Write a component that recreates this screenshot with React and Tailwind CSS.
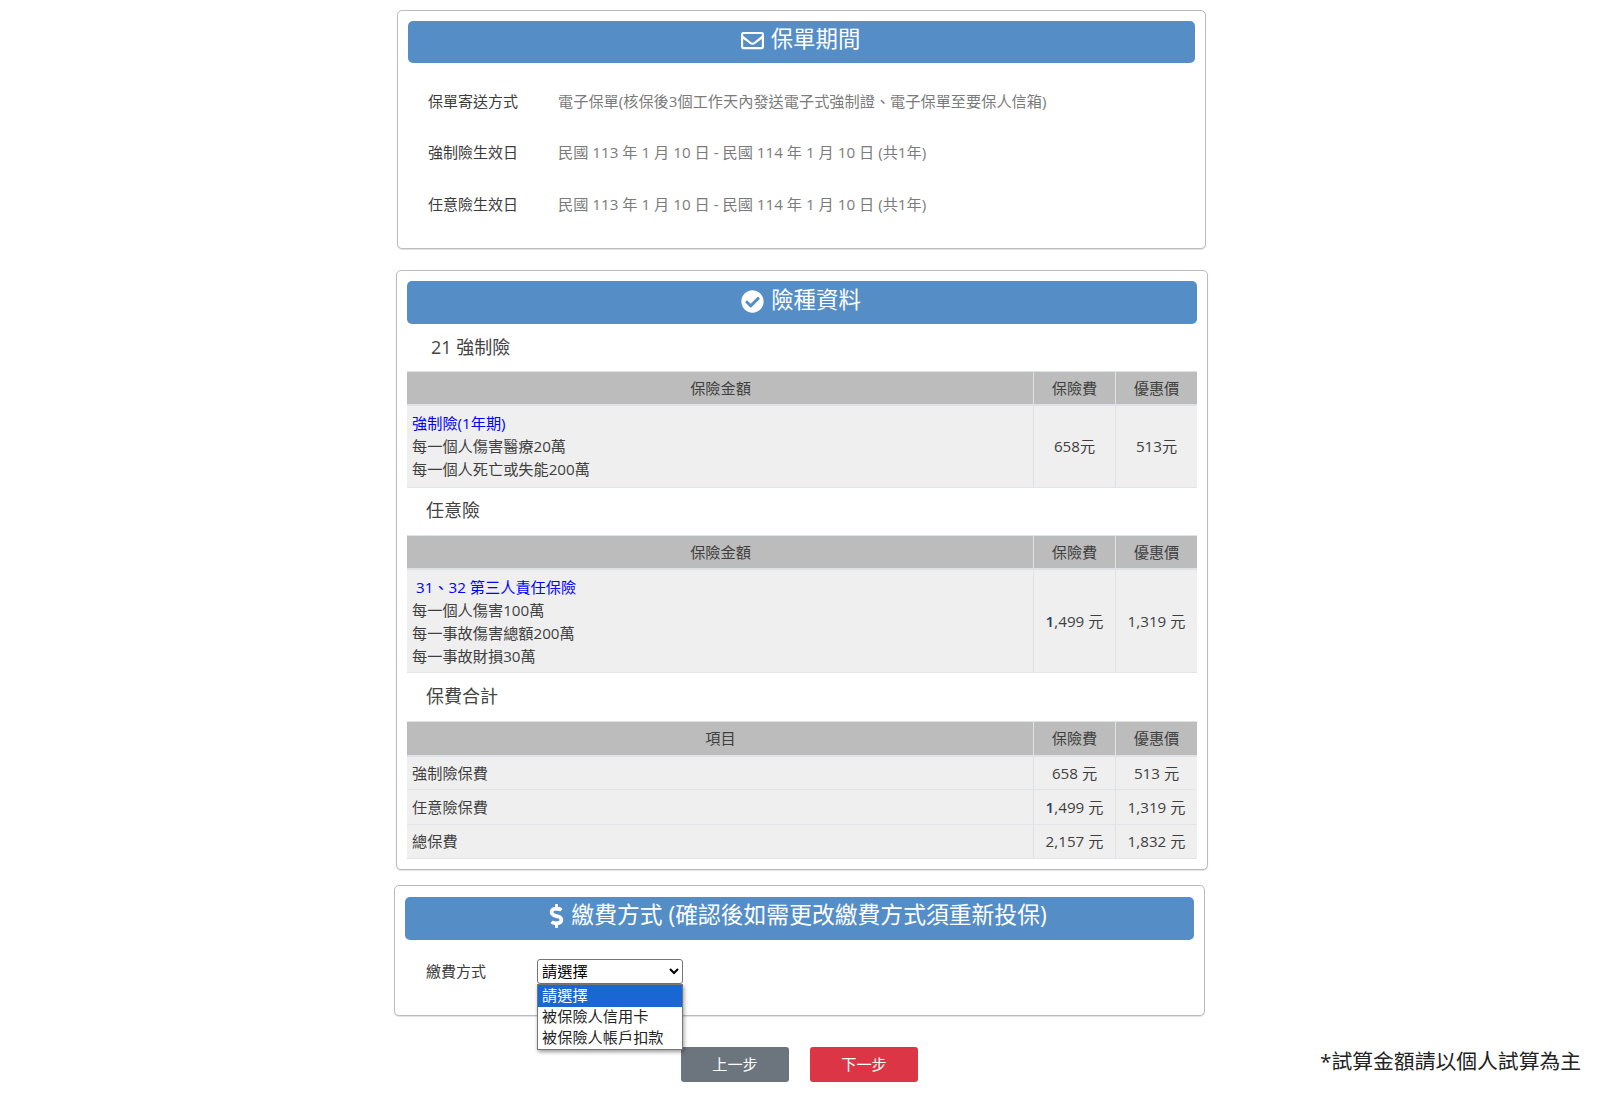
import { FaRegEnvelope, FaCheckCircle, FaDollarSign } from 'react-icons/fa'

const font = 'font-["Open_Sans","Noto_Sans_CJK_TC",sans-serif]'

function Card({ className, children }) {
  return <div className={`border border-[#bbbbbb] rounded-[5px] bg-white shadow-[0_1px_1px_rgba(0,0,0,0.12)] ${className}`}>{children}</div>
}

function Banner({ icon, title, className }) {
  return (
    <div className={`flex items-center justify-center bg-[#558ec7] text-white rounded-[5px] ${className}`}>
      {icon}
      <span>{title}</span>
    </div>
  )
}

function Row({ label, value, className }) {
  return (
    <div className={`flex items-center text-[15.2px] ${className}`}>
      <div className="w-[130px] text-[15px] text-[#3c3c3c]">{label}</div>
      <div className="text-[#7b7b7b]">{value}</div>
    </div>
  )
}

function PriceTable({ first, rows, headHeight = 'h-[34px]' }) {
  return (
    <div className="text-[15.2px] text-[#3f3f3f] border-t border-[#dee2e6]">
      <div className={`flex bg-[#bcbcbc] border-b-2 border-[#dee2e6] ${headHeight}`}>
        <div className="w-[626px] flex items-center justify-center pl-[1px]">{first}</div>
        <div className="w-[82px] flex items-center justify-center border-l border-[#dee2e6]">保險費</div>
        <div className="w-[82px] flex items-center justify-center border-l border-[#dee2e6]">優惠價</div>
      </div>
      {rows.map((row, i) => (
        <div key={i} className={`flex bg-[#efefef] border-b border-[#e2e5e7] ${row.height}`}>
          <div className="w-[626px] flex flex-col justify-center pl-[5px]">{row.left}</div>
          <div className="w-[82px] flex items-center justify-center border-l border-[#dee2e6]">{row.fee}</div>
          <div className="w-[82px] flex items-center justify-center border-l border-[#dee2e6]">{row.sale}</div>
        </div>
      ))}
    </div>
  )
}

const blue = 'text-[#0000ff]'
const big1499 = <span><b className="font-semibold text-[#2a3f5f]">1</b>,499 元</span>

export default function App() {
  return (
    <div className={`relative w-[1600px] h-[1096px] overflow-hidden bg-white ${font}`}>
      <div className="flex flex-col pt-[10px]">
        <Card className="ml-[397px] w-[809px] h-[239px] pt-[10px] px-[10px]">
          <Banner
            className="h-[42px] gap-[7px] pr-[2px] pb-[7px] text-[22.4px]"
            title="保單期間"
            icon={<FaRegEnvelope className="w-[23px] h-[23px] mt-[4px]" />}
          />
          <div className="pl-[20px] pt-[12px]">
            <Row className="h-[52px]" label="保單寄送方式" value="電子保單(核保後3個工作天內發送電子式強制證、電子保單至要保人信箱)" />
            <Row className="h-[51px]" label="強制險生效日" value="民國 113 年 1 月 10 日 - 民國 114 年 1 月 10 日 (共1年)" />
            <Row className="h-[52px]" label="任意險生效日" value="民國 113 年 1 月 10 日 - 民國 114 年 1 月 10 日 (共1年)" />
          </div>
        </Card>

        <Card className="ml-[396px] w-[812px] h-[600px] mt-[21px] pt-[10px] px-[10px]">
          <Banner
            className="h-[43px] gap-[7px] pr-[2px] pb-[6px] text-[22.4px]"
            title="險種資料"
            icon={<FaCheckCircle className="w-[23px] h-[23px] mt-[3px]" />}
          />
          <div className="h-[47px] flex items-center pl-[24px] text-[18px] text-[#444444]">21 強制險</div>
          <PriceTable
            first="保險金額"
            rows={[
              {
                height: 'h-[82px]',
                left: (
                  <>
                    <div className={`${blue} leading-[23px]`}>強制險(1年期)</div>
                    <div className="leading-[23px]">每一個人傷害醫療20萬</div>
                    <div className="leading-[23px]">每一個人死亡或失能200萬</div>
                  </>
                ),
                fee: '658元',
                sale: '513元',
              },
            ]}
          />
          <div className="h-[47px] flex items-center pl-[19px] pb-[2px] text-[18px] text-[#444444]">任意險</div>
          <PriceTable
            first="保險金額"
            rows={[
              {
                height: 'h-[103px]',
                left: (
                  <>
                    <div className={`${blue} leading-[24px] pl-[4px]`}>31、32 第三人責任保險</div>
                    <div className="leading-[23px]">每一個人傷害100萬</div>
                    <div className="leading-[23px]">每一事故傷害總額200萬</div>
                    <div className="leading-[23px]">每一事故財損30萬</div>
                  </>
                ),
                fee: big1499,
                sale: '1,319 元',
              },
            ]}
          />
          <div className="h-[48px] flex items-center pl-[19px] pb-[2px] text-[18px] text-[#444444]">保費合計</div>
          <PriceTable
            first="項目"
            headHeight="h-[35px]"
            rows={[
              { height: 'h-[33px]', left: '強制險保費', fee: '658 元', sale: '513 元' },
              { height: 'h-[35px]', left: '任意險保費', fee: big1499, sale: '1,319 元' },
              { height: 'h-[34px]', left: '總保費', fee: '2,157 元', sale: '1,832 元' },
            ]}
          />
        </Card>

        <Card className="ml-[394px] w-[811px] h-[131px] mt-[15px] pt-[10px] px-[10px]">
          <Banner
            className="h-[43px] mt-[1px] gap-[5px] pr-[5px] pb-[6px] text-[22.8px]"
            title="繳費方式 (確認後如需更改繳費方式須重新投保)"
            icon={<FaDollarSign className="w-[19px] h-[24px]" />}
          />
          <div className="flex items-center mt-[19px] pl-[21px] text-[15px] text-[#3c3c3c]">
            <div className="w-[111px]">繳費方式</div>
            <select className="w-[146px] h-[25px] pb-[1px] border border-[#767676] rounded-[3px] bg-white text-[15.2px] text-black">
              <option>請選擇</option>
              <option>被保險人信用卡</option>
              <option>被保險人帳戶扣款</option>
            </select>
          </div>
        </Card>

        <div className="flex ml-[681px] gap-[21px] mt-[31px]">
          <button className="w-[108px] h-[35px] bg-[#6c757d] text-white text-[15.2px] rounded-[3px]">上一步</button>
          <button className="w-[108px] h-[35px] bg-[#dc3545] text-white text-[15.2px] rounded-[3px]">下一步</button>
        </div>
      </div>

      {/* open dropdown list */}
      <div className="absolute left-[537px] top-[984px] w-[146px] h-[66px] border border-[#767676] bg-white text-[15.2px] text-[#222222] shadow-[1px_2px_4px_rgba(0,0,0,0.4)]">
        <div className="h-[22px] bg-[#1967d2] text-white pl-[4px] leading-[20px]">請選擇</div>
        <div className="h-[21px] pl-[4px] leading-[19px]">被保險人信用卡</div>
        <div className="h-[21px] pl-[4px] leading-[19px]">被保險人帳戶扣款</div>
      </div>

      <div className="absolute left-[1320px] top-[1048px] text-[20.8px] leading-[27px] text-[#222222]">*試算金額請以個人試算為主</div>
    </div>
  )
}
